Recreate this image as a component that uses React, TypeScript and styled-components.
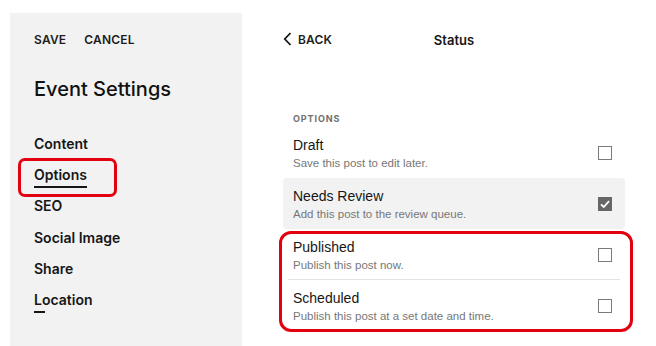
import styled, { createGlobalStyle } from "styled-components";

const GlobalStyle = createGlobalStyle`
  body {
    margin: 0;
    background: #ffffff;
    font-family: "Liberation Sans", Arial, sans-serif;
    color: #161616;
  }
`;

const navItems = ["Content", "Options", "SEO", "Social Image", "Share", "Location"];

const statusRows = [
  { title: "Draft", desc: "Save this post to edit later.", checked: false },
  { title: "Needs Review", desc: "Add this post to the review queue.", checked: true },
];

const highlightedRows = [
  { title: "Published", desc: "Publish this post now." },
  { title: "Scheduled", desc: "Publish this post at a set date and time." },
];

function Checkbox({ checked }: { checked?: boolean }) {
  return (
    <Box $checked={checked}>
      {checked && (
        <svg width="12" height="12" viewBox="0 0 12 12">
          <path d="M2 6.3 L4.8 9 L10 3.2" fill="none" stroke="#fff" strokeWidth="1.8" />
        </svg>
      )}
    </Box>
  );
}

export default function App() {
  return (
    <Page>
      <GlobalStyle />
      <Sidebar>
        <Actions>
          <ActionLink>SAVE</ActionLink>
          <ActionLink>CANCEL</ActionLink>
        </Actions>
        <Heading>Event Settings</Heading>
        <Nav>
          {navItems.map((item) => (
            <NavItem key={item} $highlight={item === "Options"}>
              <NavLabel $active={item === "Options"} $marker={item === "Location"}>
                {item}
              </NavLabel>
            </NavItem>
          ))}
        </Nav>
      </Sidebar>

      <Main>
        <TopBar>
          <BackLink>
            <svg width="9" height="14" viewBox="0 0 9 14">
              <path d="M7.5 1 L1.8 7 L7.5 13" fill="none" stroke="#161616" strokeWidth="1.8" />
            </svg>
            BACK
          </BackLink>
          <PanelTitle>Status</PanelTitle>
        </TopBar>

        <SectionLabel>OPTIONS</SectionLabel>
        {statusRows.map((row) => (
          <Row key={row.title} $active={row.checked}>
            <RowText>
              <RowTitle>{row.title}</RowTitle>
              <RowDesc>{row.desc}</RowDesc>
            </RowText>
            <Checkbox checked={row.checked} />
          </Row>
        ))}
        <Highlight>
          {highlightedRows.map((row, i) => (
            <Row key={row.title} $divider={i === 0}>
              <RowText>
                <RowTitle>{row.title}</RowTitle>
                <RowDesc>{row.desc}</RowDesc>
              </RowText>
              <Checkbox />
            </Row>
          ))}
        </Highlight>
      </Main>
    </Page>
  );
}

const Page = styled.div`
  display: flex;
  padding: 13px 0 0 10px;
  height: 333px;
`;

const Sidebar = styled.aside`
  width: 232px;
  background: #f2f2f2;
  padding: 19px 24px 0 24px;
  box-sizing: border-box;
  display: flex;
  flex-direction: column;
`;

const Actions = styled.div`
  display: flex;
  gap: 18px;
`;

const ActionLink = styled.span`
  font-family: Inter, "Liberation Sans", sans-serif;
  font-size: 12px;
  font-weight: 600;
  letter-spacing: 0.2px;
  line-height: 16px;
  color: #1d1d1d;
`;

const Heading = styled.h1`
  margin: 29px 0 0;
  font-family: Inter, "Liberation Sans", sans-serif;
  font-size: 20px;
  font-weight: 500;
  line-height: 24px;
  color: #111;
`;

const Nav = styled.nav`
  margin-top: 27px;
  display: flex;
  flex-direction: column;
`;

const NavItem = styled.div<{ $highlight?: boolean }>`
  position: relative;
  height: 31.3px;
  display: flex;
  align-items: center;

  ${({ $highlight }) =>
    $highlight &&
    `
    &::before {
      content: "";
      position: absolute;
      left: -16px;
      top: -1px;
      width: 99px;
      height: 39px;
      box-sizing: border-box;
      border: 3px solid #e3000f;
      border-radius: 7px;
    }
  `}
`;

const NavLabel = styled.span<{ $active?: boolean; $marker?: boolean }>`
  position: relative;
  font-family: Inter, "Liberation Sans", sans-serif;
  font-size: 14px;
  font-weight: 600;
  line-height: 18px;
  color: #161616;
  padding-bottom: ${({ $active }) => ($active ? "2px" : "0")};
  border-bottom: ${({ $active }) => ($active ? "2px solid #161616" : "none")};
  margin-top: ${({ $active }) => ($active ? "4px" : "0")};

  ${({ $marker }) =>
    $marker &&
    `
    &::after {
      content: "";
      position: absolute;
      left: 0;
      bottom: -4px;
      width: 11px;
      height: 2px;
      background: #161616;
    }
  `}
`;

const Main = styled.main`
  margin-left: 41px;
  width: 342px;
  display: flex;
  flex-direction: column;
`;

const TopBar = styled.div`
  position: relative;
  display: flex;
  align-items: center;
  justify-content: center;
  height: 20px;
  margin-top: 17px;
`;

const BackLink = styled.span`
  position: absolute;
  left: 0;
  top: 0;
  display: flex;
  align-items: center;
  gap: 6px;
  height: 18px;
  font-family: Inter, "Liberation Sans", sans-serif;
  font-size: 12px;
  font-weight: 600;
  letter-spacing: 0.2px;
  color: #1d1d1d;
`;

const PanelTitle = styled.span`
  font-family: Inter, "Liberation Sans", sans-serif;
  font-size: 13px;
  font-weight: 600;
  color: #161616;
`;

const SectionLabel = styled.div`
  margin: 63px 0 2px 10px;
  font-family: Inter, "Liberation Sans", sans-serif;
  font-size: 9px;
  font-weight: 700;
  letter-spacing: 0.9px;
  line-height: 12px;
  color: #6f6f6f;
`;

const Row = styled.div<{ $active?: boolean; $divider?: boolean }>`
  position: relative;
  display: flex;
  align-items: center;
  justify-content: space-between;
  height: 51px;
  padding: 0 13px 0 10px;
  box-sizing: border-box;
  background: ${({ $active }) => ($active ? "#f2f2f2" : "transparent")};
  border-radius: 4px;

  ${({ $divider }) =>
    $divider &&
    `
    &::after {
      content: "";
      position: absolute;
      left: 5px;
      right: 5px;
      bottom: 0;
      height: 1px;
      background: #e4e4e4;
    }
  `}
`;

const RowText = styled.div`
  display: flex;
  flex-direction: column;
  gap: 2px;
  margin-top: 1px;
`;

const RowTitle = styled.span`
  font-size: 14px;
  line-height: 17px;
  color: #161616;
`;

const RowDesc = styled.span`
  font-size: 11.5px;
  line-height: 14px;
  color: #777;
`;

const Box = styled.span<{ $checked?: boolean }>`
  width: 14px;
  height: 14px;
  box-sizing: border-box;
  border: ${({ $checked }) => ($checked ? "none" : "1.5px solid #7a7a7a")};
  background: ${({ $checked }) => ($checked ? "#666" : "#fff")};
  display: flex;
  align-items: center;
  justify-content: center;
`;

const Highlight = styled.div`
  position: relative;

  &::before {
    content: "";
    position: absolute;
    left: -4px;
    right: -8px;
    top: 2px;
    bottom: -1px;
    border: 3px solid #e3000f;
    border-radius: 12px;
    pointer-events: none;
  }
`;
